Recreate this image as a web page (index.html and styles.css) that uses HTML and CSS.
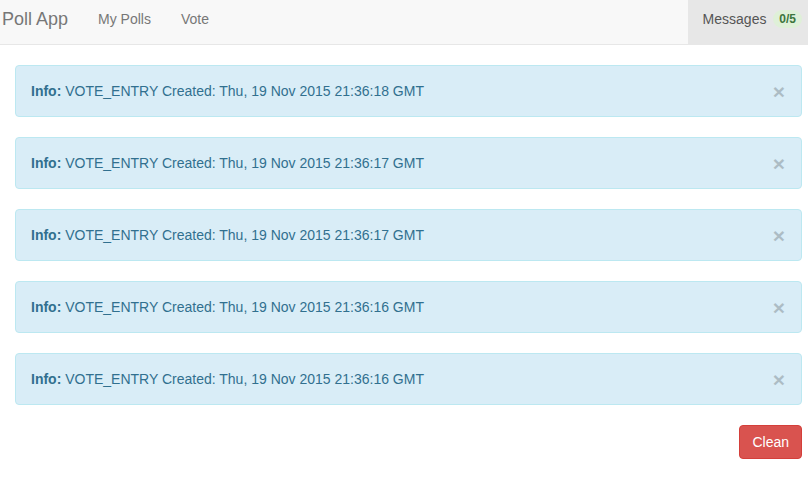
FILE: index.html
```html
<!DOCTYPE html>
<html>
<head>
<meta charset="utf-8">
<link rel="stylesheet" href="styles.css">
</head>
<body>
<nav class="navbar">
  <div class="nav-left">
    <a class="brand">Poll App</a>
    <a class="nav-link">My Polls</a>
    <a class="nav-link">Vote</a>
  </div>
  <div class="nav-right">
    <a class="nav-link active">Messages <span class="badge">0/5</span></a>
  </div>
</nav>
<main class="container">
  <div class="alert"><span><strong>Info:</strong> VOTE_ENTRY Created: Thu, 19 Nov 2015 21:36:18 GMT</span><button class="close">×</button></div>
  <div class="alert"><span><strong>Info:</strong> VOTE_ENTRY Created: Thu, 19 Nov 2015 21:36:17 GMT</span><button class="close">×</button></div>
  <div class="alert"><span><strong>Info:</strong> VOTE_ENTRY Created: Thu, 19 Nov 2015 21:36:17 GMT</span><button class="close">×</button></div>
  <div class="alert"><span><strong>Info:</strong> VOTE_ENTRY Created: Thu, 19 Nov 2015 21:36:16 GMT</span><button class="close">×</button></div>
  <div class="alert"><span><strong>Info:</strong> VOTE_ENTRY Created: Thu, 19 Nov 2015 21:36:16 GMT</span><button class="close">×</button></div>
  <div class="actions"><button class="btn-danger">Clean</button></div>
</main>
</body>
</html>
```
FILE: styles.css
```css
* { box-sizing: border-box; }
body {
  margin: 0;
  font-family: "Liberation Sans", Arial, sans-serif;
  font-size: 14px;
  line-height: 20px;
  color: #333;
  background: #fff;
}
.navbar {
  display: flex;
  justify-content: space-between;
  background: #f8f8f8;
  border-bottom: 1px solid #e7e7e7;
  height: 45px;
}
.nav-left, .nav-right { display: flex; }
.brand {
  font-size: 18px;
  color: #777;
  padding: 9px 15px 15px 2px;
  line-height: 20px;
}
.nav-link {
  color: #777;
  padding: 9px 15px 15px;
  line-height: 20px;
}
.nav-link.active {
  background: #e7e7e7;
  color: #555;
  padding-left: 15px;
  padding-right: 6px;
}
.badge {
  display: inline-block;
  margin-left: 3px;
  padding: 3px 6px;
  font-size: 12px;
  font-weight: bold;
  line-height: 1;
  color: #3c763d;
  background: #dff0d8;
  border-radius: 10px;
  vertical-align: 1px;
}
.container {
  padding: 20px 6px 0 15px;
}
.alert {
  display: flex;
  justify-content: space-between;
  align-items: center;
  height: 52px;
  padding: 15px;
  margin-bottom: 20px;
  border: 1px solid #bce8f1;
  border-radius: 4px;
  background: #d9edf7;
  color: #31708f;
}
.alert strong { font-weight: bold; }
.close {
  background: none;
  border: 0;
  padding: 0;
  margin: 0 1px 0 0;
  height: 20px;
  font-family: "Liberation Sans", Arial, sans-serif;
  font-size: 21px;
  font-weight: bold;
  line-height: 20px;
  color: #000;
  opacity: 0.2;
  position: relative;
  top: 1px;
  cursor: pointer;
}
.actions {
  display: flex;
  justify-content: flex-end;
}
.btn-danger {
  font-family: "Liberation Sans", Arial, sans-serif;
  font-size: 14px;
  line-height: 20px;
  padding: 6px 12px;
  color: #fff;
  background: #d9534f;
  border: 1px solid #d43f3a;
  border-radius: 4px;
}
```
